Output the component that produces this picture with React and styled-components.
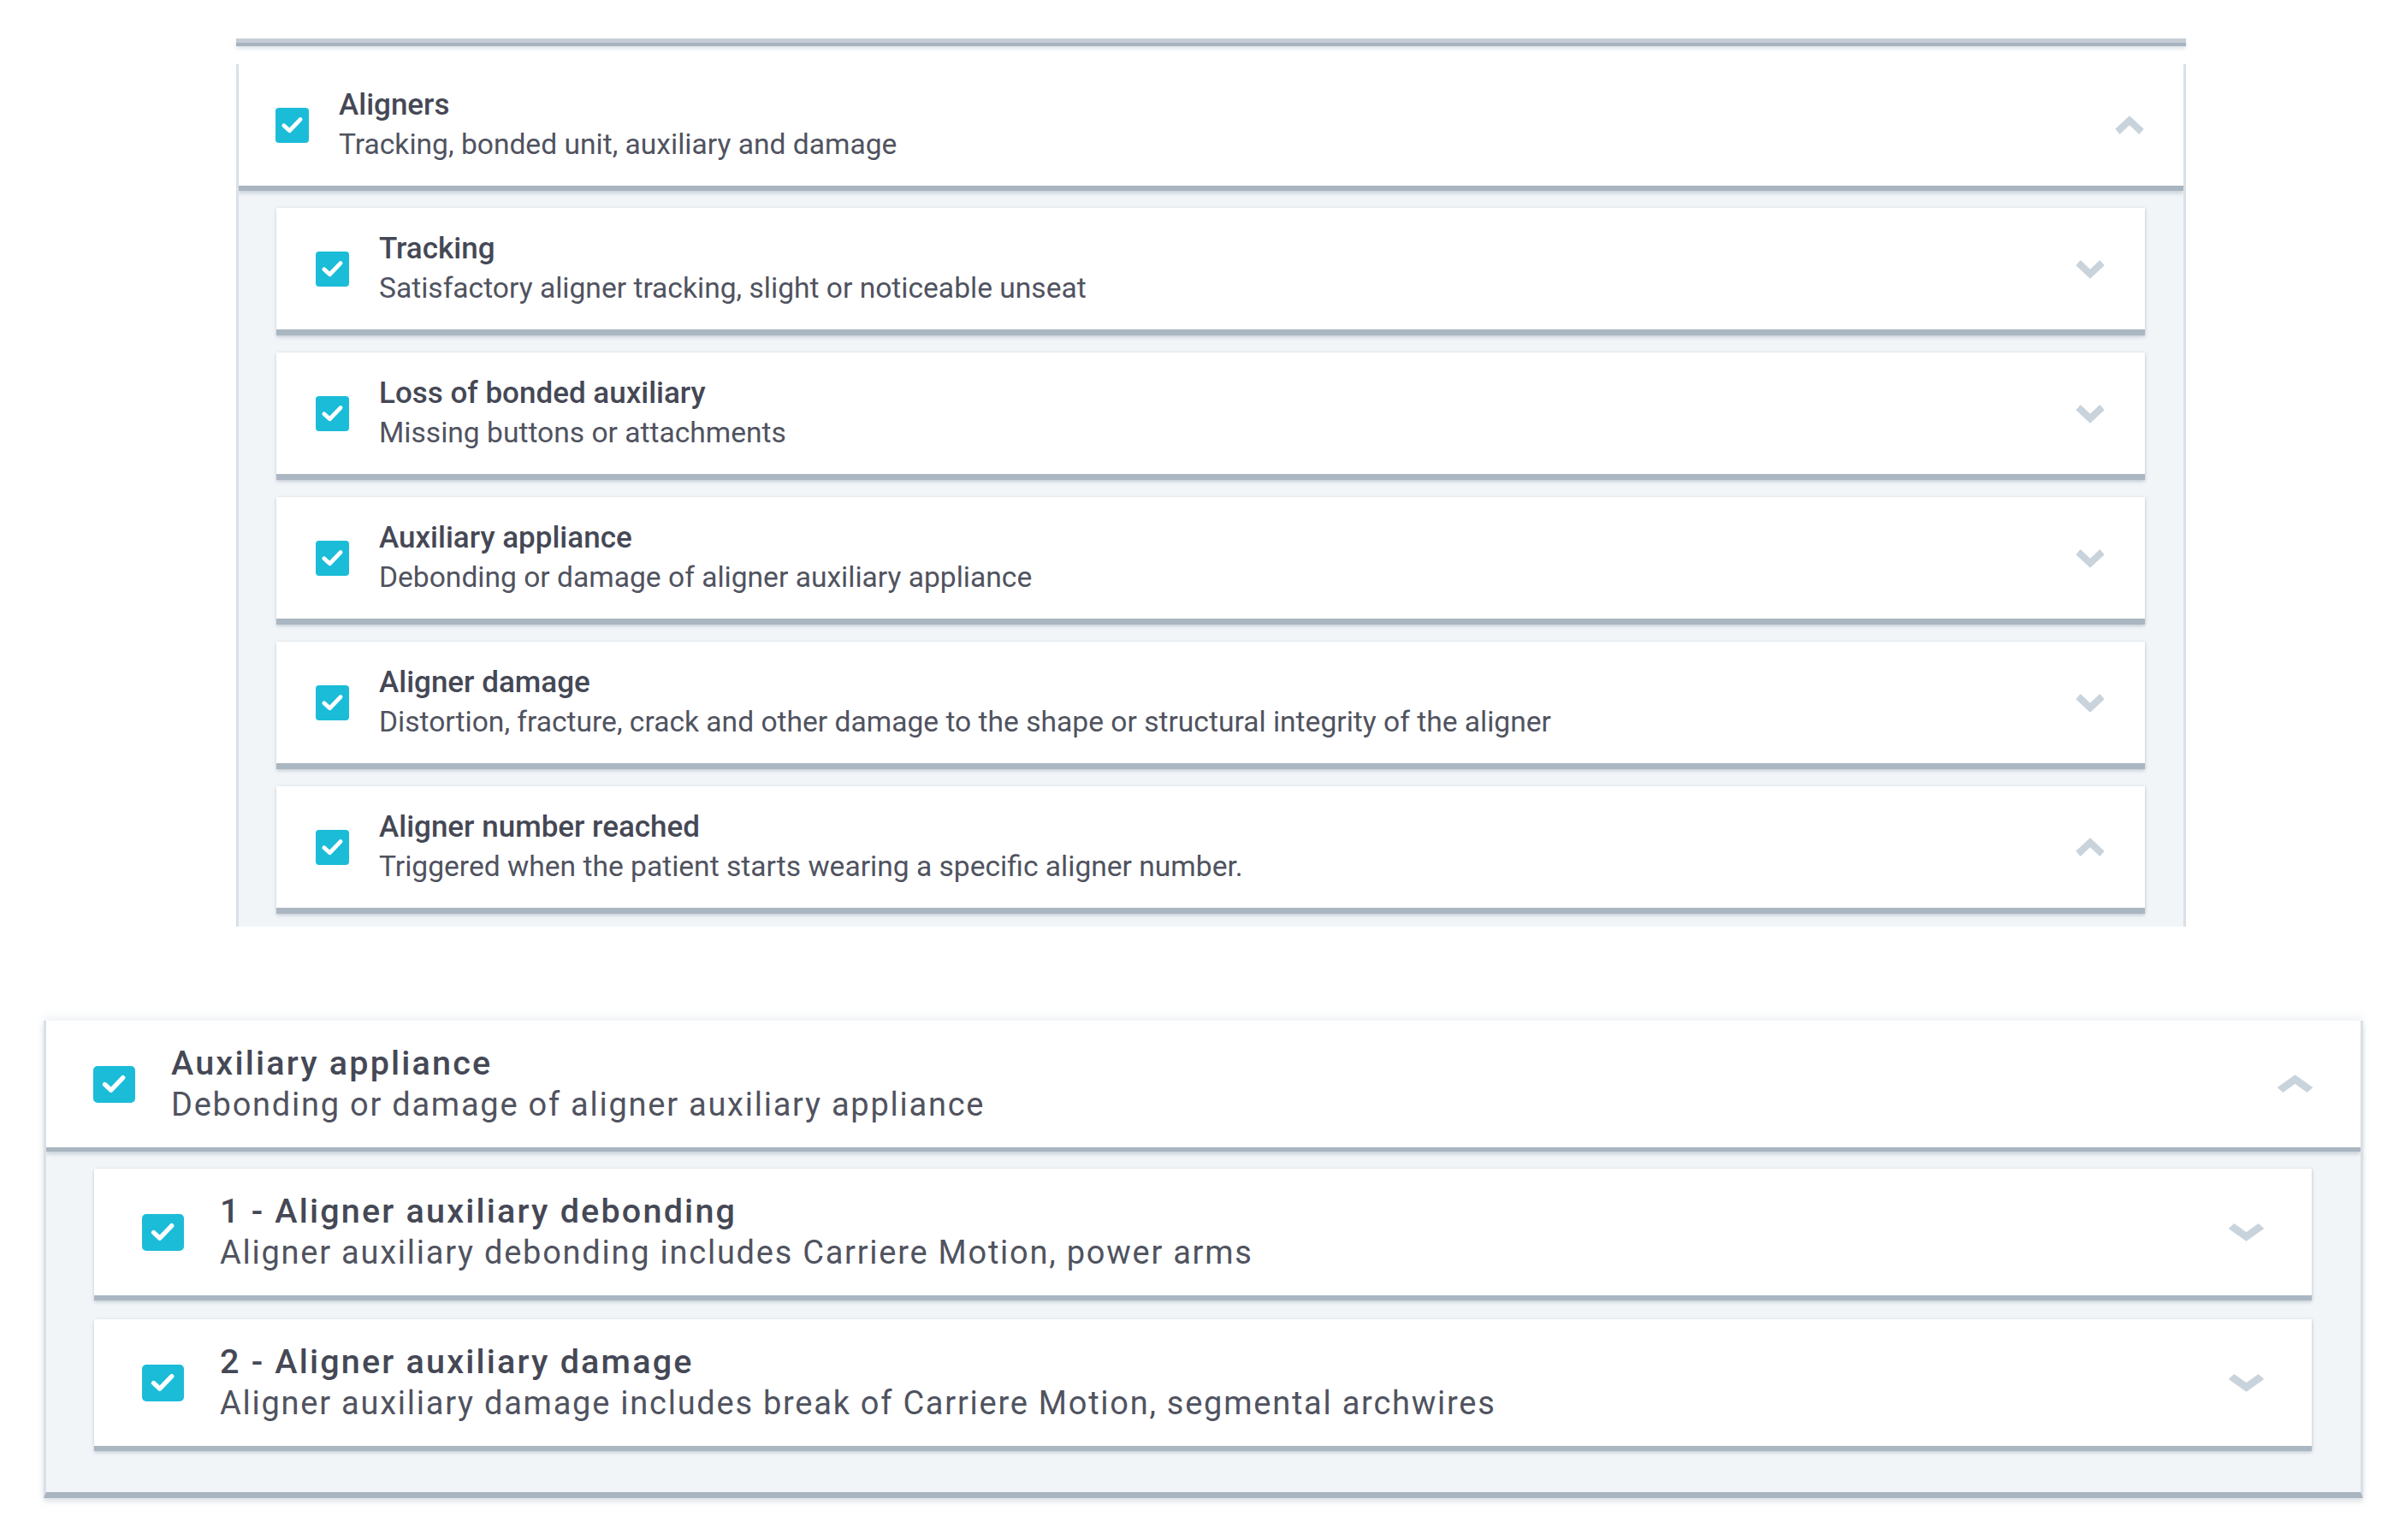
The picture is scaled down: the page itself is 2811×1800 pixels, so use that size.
import React from 'react';
import styled, { createGlobalStyle } from 'styled-components';

const GlobalStyle = createGlobalStyle`
    html, body {
        margin: 0;
        padding: 0;
        background: #ffffff;
        font-family: 'Roboto', 'Liberation Sans', sans-serif;
    }
`;

const small = {
    box: [39, 41],
    radius: 4,
    gap: 35,
    font: 33.6,
    titleFont: 35,
    line: 46,
    spacing: 0,
    titleSpacing: 0,
    rowH: 142,
    chev: [36, 23],
    headPad: [43, 45],
    bodyPad: [44, 45],
    cardPad: [46, 46],
    edge: 7,
    cardGap: 20,
    bottomPad: 20,
};

const large = {
    box: [49, 43],
    radius: 5,
    gap: 42,
    font: 38,
    titleFont: 39.5,
    line: 48,
    spacing: 1.75,
    titleSpacing: 2.2,
    rowH: 148,
    chev: [45, 22],
    headPad: [55, 54],
    bodyPad: [56, 57],
    cardPad: [56, 54],
    edge: 6,
    cardGap: 22,
    bottomPad: 48,
};

const aligners = {
    title: 'Aligners',
    text: 'Tracking, bonded unit, auxiliary and damage',
    items: [
        { title: 'Tracking', text: 'Satisfactory aligner tracking, slight or noticeable unseat' },
        { title: 'Loss of bonded auxiliary', text: 'Missing buttons or attachments' },
        { title: 'Auxiliary appliance', text: 'Debonding or damage of aligner auxiliary appliance' },
        { title: 'Aligner damage', text: 'Distortion, fracture, crack and other damage to the shape or structural integrity of the aligner' },
        { title: 'Aligner number reached', text: 'Triggered when the patient starts wearing a specific aligner number.', open: true },
    ],
};

const auxiliary = {
    title: 'Auxiliary appliance',
    text: 'Debonding or damage of aligner auxiliary appliance',
    items: [
        { title: '1 - Aligner auxiliary debonding', text: 'Aligner auxiliary debonding includes Carriere Motion, power arms' },
        { title: '2 - Aligner auxiliary damage', text: 'Aligner auxiliary damage includes break of Carriere Motion, segmental archwires' },
    ],
};

function CheckBox({ s }) {
    return (
        <Box $s={s}>
            <svg width="74%" height="74%" viewBox="0 0 24 24">
                <polyline points="4,12.5 9.5,17.5 20,6.5" fill="none" stroke="#ffffff" strokeWidth="4" strokeLinecap="round" strokeLinejoin="round" />
            </svg>
        </Box>
    );
}

function Chevron({ s, up }) {
    const [w, h] = s.chev;
    return (
        <ChevronIcon width={w} height={h} viewBox="0 0 36 22" preserveAspectRatio="none" $up={up}>
            <polyline points="4,4 18,16.5 32,4" fill="none" stroke="#c9d3dc" strokeWidth="8" />
        </ChevronIcon>
    );
}

function RowContent({ s, title, text, open }) {
    return (
        <>
            <CheckBox s={s} />
            <TextBlock $s={s}>
                <Title $s={s}>{title}</Title>
                <Subtitle $s={s}>{text}</Subtitle>
            </TextBlock>
            <Chevron s={s} up={open} />
        </>
    );
}

function Group({ s, data, clip }) {
    return (
        <Panel $s={s} $clip={clip}>
            <Header $s={s}>
                <RowContent s={s} title={data.title} text={data.text} open />
            </Header>
            <Body $s={s}>
                {data.items.map((item) => (
                    <Card key={item.title} $s={s}>
                        <RowContent s={s} title={item.title} text={item.text} open={item.open} />
                    </Card>
                ))}
            </Body>
        </Panel>
    );
}

export default function App() {
    return (
        <>
            <GlobalStyle />
            <Page>
                <TopSection>
                    <PrevEdge />
                    <Group s={small} data={aligners} clip />
                </TopSection>
                <BottomSection>
                    <Group s={large} data={auxiliary} />
                </BottomSection>
            </Page>
        </>
    );
}

const Page = styled.div`
    display: flex;
    flex-direction: column;
    align-items: flex-start;
    padding-top: 45px;
    width: 2811px;
    height: 1800px;
    box-sizing: border-box;
    overflow: hidden;
`;

const TopSection = styled.section`
    margin-left: 276px;
    width: 2279px;
    display: flex;
    flex-direction: column;
    gap: 21px;
`;

const PrevEdge = styled.div`
    flex: none;
    height: 4px;
    border-top: 5px solid #c4ccd4;
    background: #a7b3be;
    box-shadow: 0 3px 4px rgba(120, 140, 160, 0.22);
`;

const BottomSection = styled.section`
    margin-top: 110px;
    margin-left: 51px;
    width: 2711px;
`;

const Panel = styled.div`
    display: flex;
    flex-direction: column;
    background: #f2f5f8;
    border-left: 3px solid #d9e0e6;
    border-right: 3px solid #d9e0e6;
    height: ${(p) => (p.$clip ? '1008px' : 'auto')};
    overflow: hidden;
    border-bottom: ${(p) => (p.$clip ? 'none' : `${p.$s.edge + 1}px solid #a9b5c0`)};
    box-shadow: ${(p) => (p.$clip ? 'none' : '0 4px 6px rgba(120, 140, 160, 0.25), 0 -6px 8px rgba(120, 140, 160, 0.08)')};
`;

const Row = styled.div`
    position: relative;
    flex: none;
    display: flex;
    align-items: center;
    background: #ffffff;
    box-sizing: content-box;
    height: ${(p) => p.$s.rowH}px;
`;

const Header = styled(Row)`
    z-index: 1;
    padding: 0 ${(p) => p.$s.headPad[1]}px 0 ${(p) => p.$s.headPad[0]}px;
    border-bottom: ${(p) => p.$s.edge - 1}px solid #a9b5c0;
    box-shadow: 0 3px 4px rgba(110, 130, 150, 0.3);
`;

const Body = styled.div`
    flex: none;
    display: flex;
    flex-direction: column;
    gap: ${(p) => p.$s.cardGap}px;
    padding: 20px ${(p) => p.$s.bodyPad[1]}px ${(p) => p.$s.bottomPad}px ${(p) => p.$s.bodyPad[0]}px;
`;

const Card = styled(Row)`
    padding: 0 ${(p) => p.$s.cardPad[1]}px 0 ${(p) => p.$s.cardPad[0]}px;
    border-bottom: ${(p) => p.$s.edge}px solid #aab6c1;
    box-shadow: 0 2px 4px rgba(110, 130, 150, 0.3), 1px 0 3px rgba(110, 130, 150, 0.12);
`;

const Box = styled.span`
    flex: none;
    display: flex;
    align-items: center;
    justify-content: center;
    width: ${(p) => p.$s.box[0]}px;
    height: ${(p) => p.$s.box[1]}px;
    border-radius: ${(p) => p.$s.radius}px;
    background: #1bbcd8;
`;

const TextBlock = styled.div`
    flex: 1;
    display: flex;
    flex-direction: column;
    margin-left: ${(p) => p.$s.gap}px;
    line-height: ${(p) => p.$s.line}px;
    white-space: nowrap;
`;

const Title = styled.div`
    font-size: ${(p) => p.$s.titleFont}px;
    letter-spacing: ${(p) => p.$s.titleSpacing}px;
    font-weight: 500;
    color: #454855;
`;

const Subtitle = styled.div`
    font-size: ${(p) => p.$s.font}px;
    letter-spacing: ${(p) => p.$s.spacing}px;
    font-weight: 400;
    color: #50535f;
`;

const ChevronIcon = styled.svg`
    flex: none;
    transform: ${(p) => (p.$up ? 'rotate(180deg)' : 'none')};
`;
